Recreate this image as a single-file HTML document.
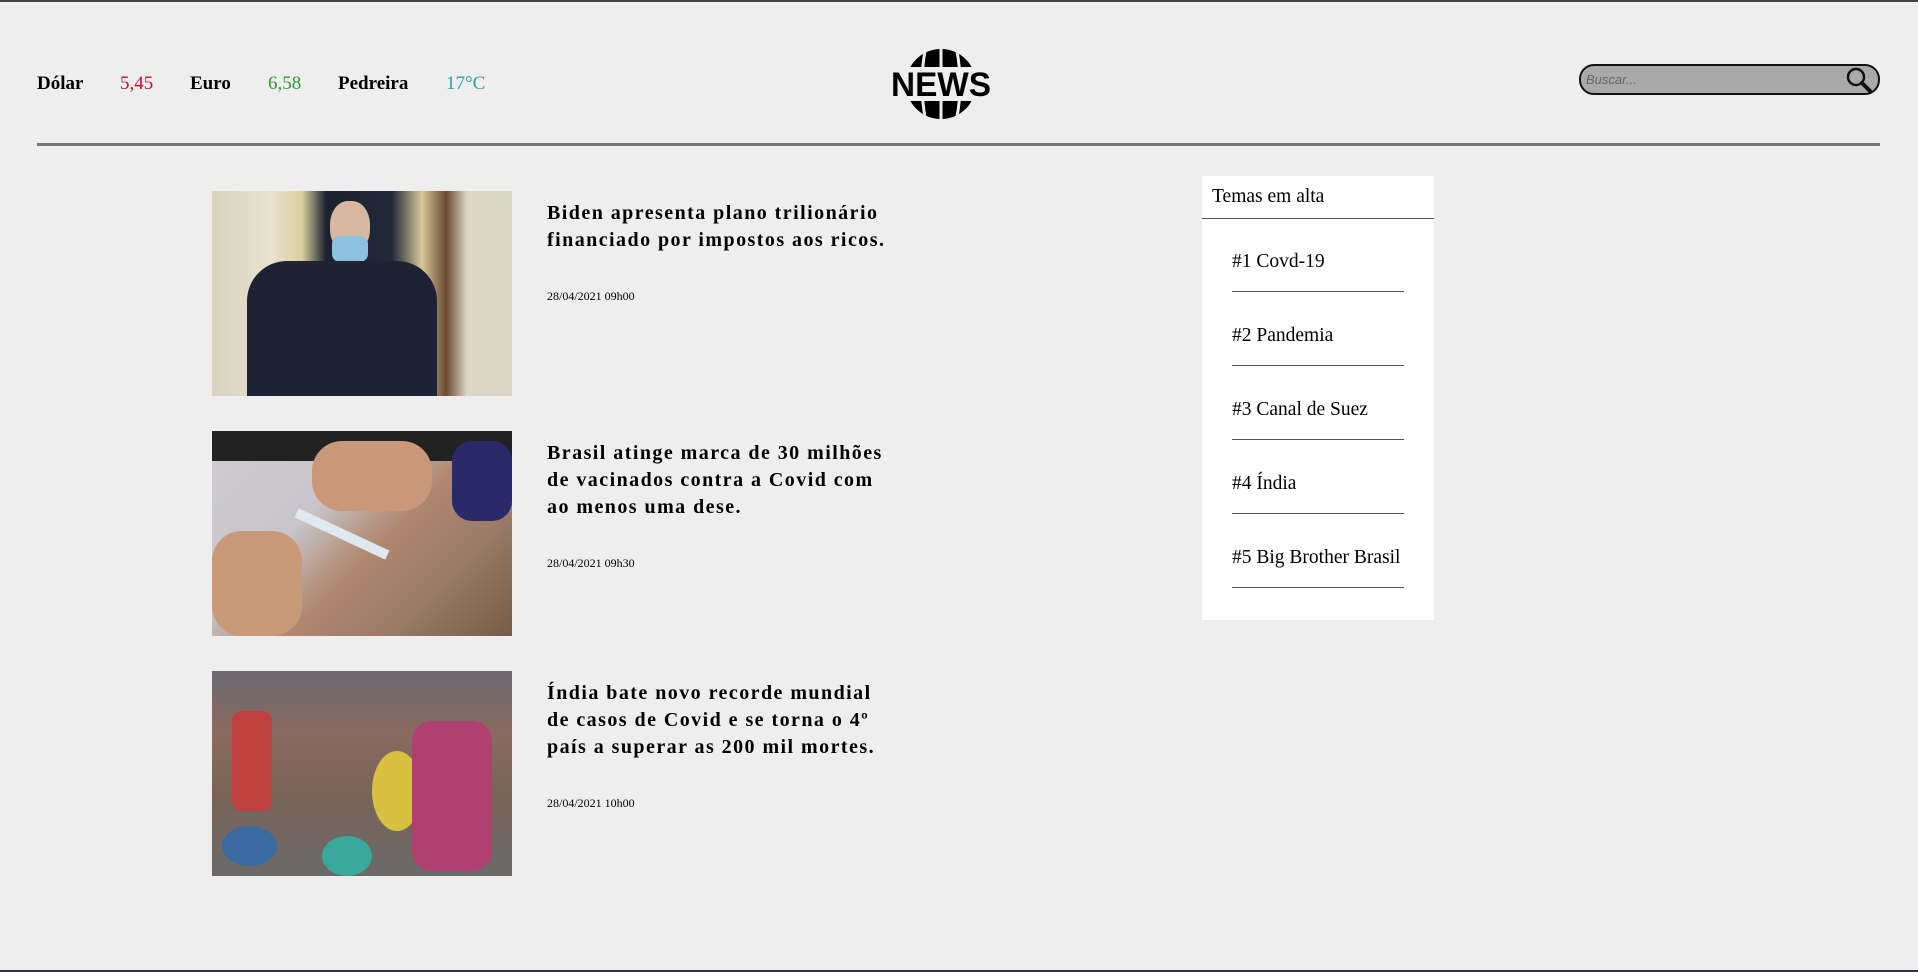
<!DOCTYPE html>
<html><head><meta charset="utf-8"><style>
*{margin:0;padding:0;box-sizing:border-box}
body{width:1918px;height:972px;background:#eeeeee;font-family:"Liberation Serif",serif;position:relative;overflow:hidden;border-top:2px solid #444;}
.a{position:absolute;white-space:nowrap}
.q{font-size:19px;top:71px}
.b{font-weight:bold}
.t{font-size:20px;font-weight:bold;letter-spacing:1.45px;line-height:27px;left:547px;white-space:normal;width:345px}
.d{font-size:12px;left:547px}
.img{position:absolute;left:212px;width:300px;height:205px;overflow:hidden}
.side{position:absolute;left:1202px;top:174px;width:232px;height:444px;background:#fff}
.it{position:absolute;left:30px;width:172px;font-size:19.5px;border-bottom:1px solid #555;height:41px;}
</style></head><body>
<div class="a q b" style="left:37px">Dólar</div>
<div class="a q" style="left:120px;color:#c8102e">5,45</div>
<div class="a q b" style="left:190px">Euro</div>
<div class="a q" style="left:268px;color:#2a9d2a">6,58</div>
<div class="a q b" style="left:338px">Pedreira</div>
<div class="a q" style="left:446px;color:#2aa0b0">17°C</div>

<svg class="a" style="left:888px;top:44px" width="106" height="76" viewBox="0 0 106 76">
<defs><clipPath id="c"><circle cx="53" cy="38" r="35"/></clipPath></defs>
<g clip-path="url(#c)">
<rect x="0" y="0" width="106" height="76" fill="#000"/>
<path d="M53 0V76M38 0Q30 38 38 76M68 0Q76 38 68 76M24 0Q14 38 24 76M82 0Q92 38 82 76" stroke="#eee" stroke-width="3" fill="none"/>
</g>
<rect x="0" y="21" width="106" height="34" fill="#eee"/>
<text x="53" y="50" text-anchor="middle" font-family="Liberation Sans" font-weight="bold" font-size="34" textLength="100" lengthAdjust="spacingAndGlyphs">NEWS</text>
</svg>

<div class="a" style="left:1579px;top:62px;width:301px;height:31px;border:2px solid #111;border-radius:15px;background:#a9a9a9"></div>
<div class="a" style="left:1586px;top:70px;font-family:'Liberation Sans';font-style:italic;font-size:13px;color:#666">Buscar...</div>
<svg class="a" style="left:1845px;top:64px" width="30" height="28"><circle cx="11" cy="11" r="8" fill="none" stroke="#111" stroke-width="2.5"/><path d="M17 17L25 25" stroke="#111" stroke-width="4" stroke-linecap="round"/></svg>

<div class="a" style="left:37px;top:141px;width:1843px;height:3px;background:#777"></div>

<div class="img" style="top:189px;background:linear-gradient(90deg,#d8d2c0 0%,#e8e2d0 20%,#d9cf9e 30%,#1d2230 38%,#222838 60%,#d8c89a 70%,#6a4a30 78%,#dcd6c6 85%)">
<div style="position:absolute;left:118px;top:10px;width:40px;height:52px;border-radius:45%;background:#d8b8a0"></div>
<div style="position:absolute;left:120px;top:45px;width:36px;height:26px;border-radius:8px;background:#8ec0e0"></div>
<div style="position:absolute;left:35px;top:70px;width:190px;height:140px;border-radius:40px 40px 0 0;background:#1e2333"></div>
</div>
<div class="a t" style="top:198px">Biden apresenta plano trilionário financiado por impostos aos ricos.</div>
<div class="a d" style="top:287px">28/04/2021 09h00</div>

<div class="img" style="top:429px;background:linear-gradient(135deg,#d0ccd0 0%,#c8c6cc 35%,#b08870 55%,#9a7a68 75%,#7a5a48 100%)">
<div style="position:absolute;left:0;top:0;width:300px;height:30px;background:#222"></div>
<div style="position:absolute;left:240px;top:10px;width:60px;height:80px;background:#2a2a6a;border-radius:20px"></div>
<div style="position:absolute;left:0;top:100px;width:90px;height:105px;background:#c89a78;border-radius:30px"></div>
<div style="position:absolute;left:100px;top:10px;width:120px;height:70px;background:#c89878;border-radius:30px"></div>
<div style="position:absolute;left:80px;top:98px;width:100px;height:10px;background:#e0e8f0;transform:rotate(25deg)"></div>
</div>
<div class="a t" style="top:438px">Brasil atinge marca de 30 milhões de vacinados contra a Covid com ao menos uma dese.</div>
<div class="a d" style="top:554px">28/04/2021 09h30</div>

<div class="img" style="top:669px;background:linear-gradient(180deg,#6a6a70 0%,#8a6a60 30%,#7a6458 60%,#6a6a6a 100%)">
<div style="position:absolute;left:20px;top:40px;width:40px;height:100px;background:#c04040;border-radius:10px"></div>
<div style="position:absolute;left:160px;top:80px;width:50px;height:80px;background:#d8c040;border-radius:50%"></div>
<div style="position:absolute;left:200px;top:50px;width:80px;height:150px;background:#b04070;border-radius:20px"></div>
<div style="position:absolute;left:110px;top:165px;width:50px;height:40px;background:#3aa89a;border-radius:50%"></div>
<div style="position:absolute;left:10px;top:155px;width:55px;height:40px;background:#3a6aa0;border-radius:50%"></div>
</div>
<div class="a t" style="top:678px">Índia bate novo recorde mundial de casos de Covid e se torna o 4º país a superar as 200 mil mortes.</div>
<div class="a d" style="top:794px">28/04/2021 10h00</div>

<div class="side">
<div style="position:absolute;left:10px;top:10px;font-size:19.5px">Temas em alta</div>
<div style="position:absolute;left:0;top:42px;width:232px;height:1px;background:#555"></div>
<div class="it" style="top:75px">#1 Covd-19</div>
<div class="it" style="top:149px">#2 Pandemia</div>
<div class="it" style="top:223px">#3 Canal de Suez</div>
<div class="it" style="top:297px">#4 Índia</div>
<div class="it" style="top:371px">#5 Big Brother Brasil</div>
</div>
<div class="a" style="left:0;top:968px;width:1918px;height:2px;background:#2a2f50"></div>
</body></html>
